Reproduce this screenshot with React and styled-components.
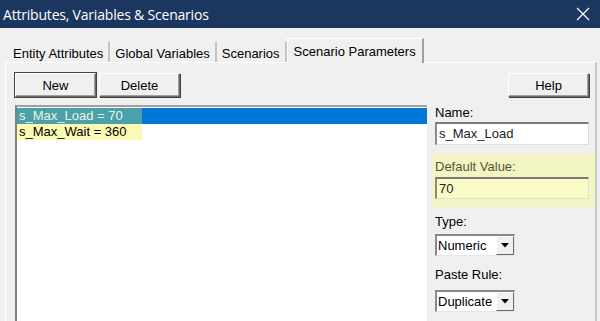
import React from 'react';
import styled, { createGlobalStyle } from 'styled-components';

const GlobalStyle = createGlobalStyle`
  html, body { margin: 0; padding: 0; background: #f0f0f0; }
  body { font-family: "Liberation Sans", Arial, sans-serif; font-size: 13px; color: #000; }
`;

const Window = styled.div`
  width: 600px;
  height: 321px;
  overflow: hidden;
  background: #f0f0f0;
  display: flex;
  flex-direction: column;
`;

const TitleBar = styled.div`
  height: 28px;
  flex: none;
  background: #1b365f;
  color: #fff;
  display: flex;
  align-items: center;
  justify-content: space-between;
  padding: 0 10px 0 3px;
  font-family: "Open Sans", "Noto Sans", sans-serif;
  font-size: 14px;
  letter-spacing: -0.2px;
`;

const CloseIcon = () => (
  <svg width="14" height="14" viewBox="0 0 14 14">
    <path d="M1 1 L13 13 M13 1 L1 13" stroke="#fff" strokeWidth="1.2" />
  </svg>
);

const Body = styled.div`
  flex: 1;
  padding: 8px 3px 0 5px;
  display: flex;
  flex-direction: column;
  min-height: 0;
`;

const TabStrip = styled.div`
  display: flex;
  align-items: flex-end;
  height: 26px;
  padding-left: 3px;
`;

const Tab = styled.div`
  height: ${({ active }) => (active ? '25px' : '21px')};
  padding: 0 ${({ active }) => (active ? '6px' : '5px')};
  display: flex;
  align-items: center;
  white-space: nowrap;
  box-sizing: border-box;
  background: #f0f0f0;
  border-right: 2px solid ${({ active }) => (active ? '#a0a0a0' : '#c4c4c4')};
  border-left: ${({ active }) => (active ? '1px solid #fff' : 'none')};
  border-top: ${({ active }) => (active ? '1px solid #fff' : '1px solid transparent')};
  margin-bottom: ${({ active }) => (active ? '-1px' : '0')};
  position: relative;
  z-index: ${({ active }) => (active ? 1 : 0)};
  padding-top: ${({ active }) => (active ? '0' : '3px')};
`;

const Panel = styled.div`
  flex: 1;
  border-top: 1px solid #fff;
  border-left: 1px solid #fff;
  border-right: 2px solid #c8c8c8;
  display: grid;
  grid-template-columns: 412px 1fr;
  column-gap: 8px;
  padding: 10px 8px 0 9px;
  min-height: 0;
`;

const MainCol = styled.div`
  display: flex;
  flex-direction: column;
  min-height: 0;
`;

const SideCol = styled.div`
  display: flex;
  flex-direction: column;
`;

const ButtonRow = styled.div`
  display: flex;
  gap: 3px;
  justify-content: ${({ end }) => (end ? 'flex-end' : 'flex-start')};
`;

const Button = styled.button`
  width: ${({ w }) => w || 81}px;
  height: 24px;
  box-sizing: border-box;
  font-family: "Liberation Sans", Arial, sans-serif;
  font-size: 13px;
  color: #000;
  background: #f0f0f0;
  border: 1px solid;
  border-color: #fff #6a6a6a #6a6a6a #fff;
  box-shadow: ${({ primary }) =>
    primary
      ? '0 0 0 1px #444, inset -1px -1px 0 #a0a0a0'
      : 'inset -1px -1px 0 #a0a0a0, 1px 1px 0 #404040'};
  padding: 0;
`;

const ListBox = styled.div`
  margin-top: 8px;
  flex: 1;
  background: #fff;
  border-top: 2px solid #a0a0a0;
  border-left: 2px solid #808080;
  padding-top: 1px;
`;

const ListItem = styled.div`
  height: 16px;
  line-height: 16px;
  background: ${({ selected }) => (selected ? '#0078d7' : 'transparent')};
  color: ${({ selected }) => (selected ? '#eef4e0' : '#000')};
`;

const Marker = styled.span`
  display: inline-block;
  width: 123px;
  height: 16px;
  padding-left: 2px;
  background: ${({ onBlue }) => (onBlue ? '#4aa0ab' : '#fafab4')};
`;

const Label = styled.div`
  margin-top: ${({ mt }) => mt || 0}px;
  height: 15px;
  line-height: 15px;
  color: inherit;
`;

const TextInput = styled.div`
  margin-top: ${({ mt }) => mt || 2}px;
  height: ${({ h }) => h || 23}px;
  box-sizing: border-box;
  width: 154px;
  background: ${({ tint }) => tint || '#fff'};
  color: #222;
  border-top: 2px solid #7a7a7a;
  border-left: 2px solid #8a8a8a;
  border-right: 1px solid #e0e0e0;
  border-bottom: 1px solid #e0e0e0;
  padding-left: 2px;
  line-height: 19px;
`;

const HighlightBox = styled.div`
  margin: 9px -6px 0 -3px;
  padding: 5px 6px 8px 3px;
  background: #f3f6c2;
  color: #55553a;
`;

const Select = styled.div`
  margin-top: ${({ mt }) => mt || 5}px;
  width: 80px;
  height: 22px;
  box-sizing: border-box;
  display: flex;
  background: #fff;
  border-top: 2px solid #8a8a8a;
  border-left: 2px solid #8a8a8a;
  border-right: 1px solid #e6e6e6;
  border-bottom: 1px solid #e6e6e6;
`;

const SelectText = styled.div`
  flex: 1;
  overflow: hidden;
  white-space: nowrap;
  line-height: 19px;
  padding-left: 1px;
`;

const SelectArrow = styled.div`
  width: 18px;
  flex: none;
  background: #f0f0f0;
  border-left: 1px solid #fff;
  border-top: 1px solid #fff;
  border-right: 1px solid #6a6a6a;
  border-bottom: 1px solid #6a6a6a;
  box-sizing: border-box;
  display: flex;
  align-items: center;
  justify-content: center;
`;

const Arrow = () => (
  <svg width="8" height="5" viewBox="0 0 8 5">
    <path d="M0 0 H8 L4 4.5 Z" fill="#000" />
  </svg>
);

export default function App() {
  return (
    <>
      <GlobalStyle />
      <Window>
        <TitleBar>
          <span>Attributes, Variables &amp; Scenarios</span>
          <CloseIcon />
        </TitleBar>
        <Body>
          <TabStrip>
            <Tab>Entity Attributes</Tab>
            <Tab>Global Variables</Tab>
            <Tab>Scenarios</Tab>
            <Tab active>Scenario Parameters</Tab>
          </TabStrip>
          <Panel>
            <MainCol>
              <ButtonRow>
                <Button primary>New</Button>
                <Button>Delete</Button>
              </ButtonRow>
              <ListBox>
                <ListItem selected>
                  <Marker onBlue>s_Max_Load = 70</Marker>
                </ListItem>
                <ListItem>
                  <Marker>s_Max_Wait = 360</Marker>
                </ListItem>
              </ListBox>
            </MainCol>
            <SideCol>
              <ButtonRow end>
                <Button>Help</Button>
              </ButtonRow>
              <Label mt={8}>Name:</Label>
              <TextInput>s_Max_Load</TextInput>
              <HighlightBox>
                <Label>Default Value:</Label>
                <TextInput tint="#fbfbc6" mt={3} h={22}>70</TextInput>
              </HighlightBox>
              <Label mt={7}>Type:</Label>
              <Select>
                <SelectText>Numeric</SelectText>
                <SelectArrow><Arrow /></SelectArrow>
              </Select>
              <Label mt={11}>Paste Rule:</Label>
              <Select mt={8}>
                <SelectText>Duplicate</SelectText>
                <SelectArrow><Arrow /></SelectArrow>
              </Select>
            </SideCol>
          </Panel>
        </Body>
      </Window>
    </>
  );
}
